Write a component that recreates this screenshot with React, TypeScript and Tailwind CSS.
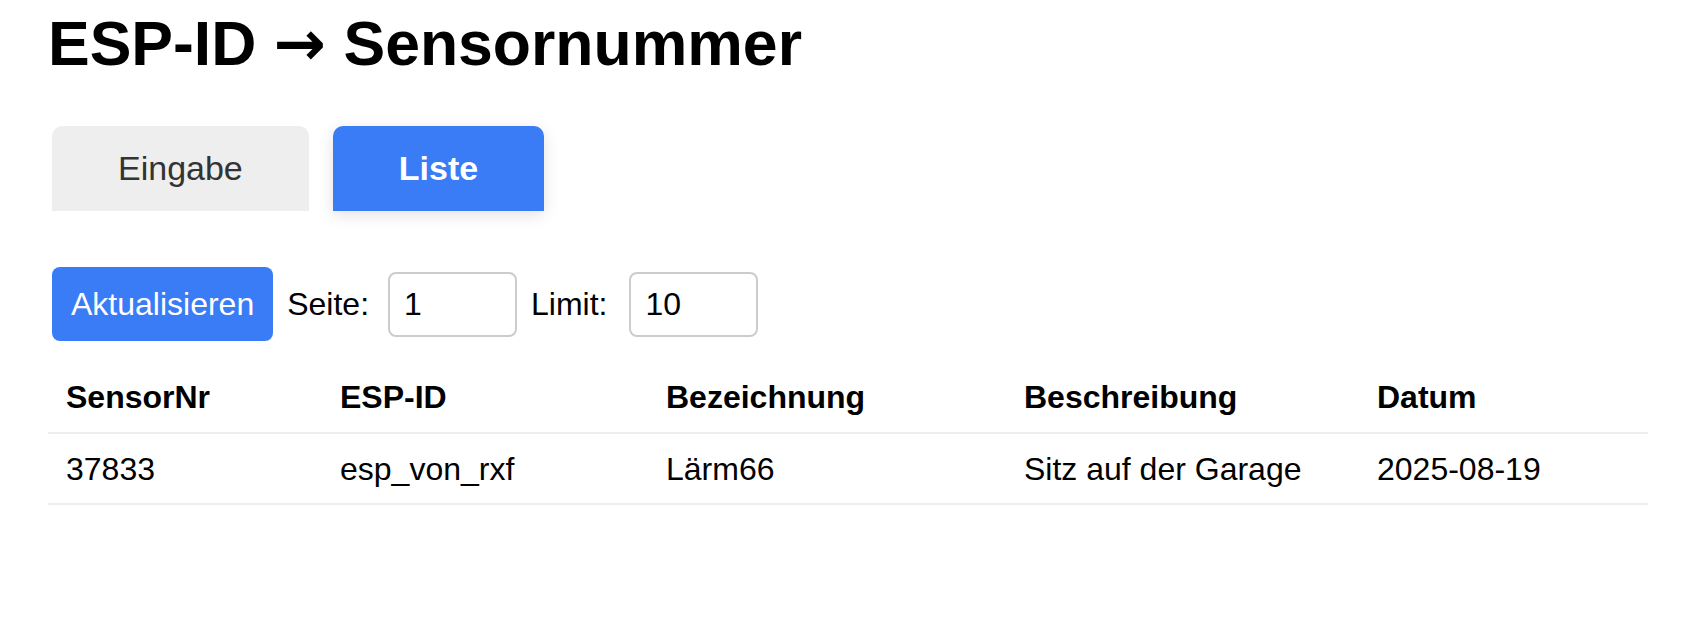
import React from 'react';

const rows = [
  {
    sensorNr: '37833',
    espId: 'esp_von_rxf',
    name: 'Lärm66',
    description: 'Sitz auf der Garage',
    date: '2025-08-19',
  },
];

function App() {
  const [tab, setTab] = React.useState<'eingabe' | 'liste'>('liste');
  const [page, setPage] = React.useState('1');
  const [limit, setLimit] = React.useState('10');

  return (
    <div className="min-h-screen bg-white px-[48px] pt-[6px] text-black font-['Liberation_Sans',Arial,sans-serif]">
      <h1 className="text-[62.5px] font-bold leading-[74px]">
        ESP-ID <span className="font-['DejaVu_Sans',sans-serif]">→</span> Sensornummer
      </h1>

      {/* Tabs */}
      <div className="mt-[45px] flex gap-[24px] pl-[4px]">
        <button
          onClick={() => setTab('eingabe')}
          className={`h-[85px] rounded-t-[10px] px-[66px] text-[34px] ${
            tab === 'eingabe'
              ? 'bg-[#3a7bf6] font-bold text-white shadow-[0_4px_16px_rgba(0,0,0,0.12)]'
              : 'bg-[#eeeeee] text-[#333333]'
          }`}
        >
          Eingabe
        </button>
        <button
          onClick={() => setTab('liste')}
          className={`h-[85px] rounded-t-[10px] px-[66px] text-[34px] ${
            tab === 'liste'
              ? 'bg-[#3a7bf6] font-bold text-white shadow-[0_4px_16px_rgba(0,0,0,0.12)]'
              : 'bg-[#eeeeee] text-[#333333]'
          }`}
        >
          Liste
        </button>
      </div>

      {/* Steuerung */}
      <div className="mt-[56px] flex items-center pl-[4px] text-[32px]">
        <button className="h-[74px] rounded-[8px] bg-[#3a7bf6] px-[19px] text-white">Aktualisieren</button>
        <label className="ml-[14px] flex items-center">
          Seite:
          <input
            value={page}
            onChange={(e) => setPage(e.target.value)}
            className="ml-[19px] h-[65px] w-[129px] rounded-[8px] border-2 border-[#cccccc] pl-[14px] outline-none"
          />
        </label>
        <label className="ml-[14px] flex items-center">
          Limit:
          <input
            value={limit}
            onChange={(e) => setLimit(e.target.value)}
            className="ml-[22px] h-[65px] w-[129px] rounded-[8px] border-2 border-[#cccccc] pl-[14px] outline-none"
          />
        </label>
      </div>

      {/* Tabelle */}
      <table className="mt-[22px] w-full table-fixed border-collapse text-left text-[32px] leading-[37px]">
        <colgroup>
          <col className="w-[274px]" />
          <col className="w-[326px]" />
          <col className="w-[358px]" />
          <col className="w-[353px]" />
          <col />
        </colgroup>
        <thead>
          <tr className="border-b-2 border-[#eeeeee]">
            <th className="px-[18px] py-[16px] font-bold">SensorNr</th>
            <th className="px-[18px] py-[16px] font-bold">ESP-ID</th>
            <th className="px-[18px] py-[16px] font-bold">Bezeichnung</th>
            <th className="px-[18px] py-[16px] font-bold">Beschreibung</th>
            <th className="px-[18px] py-[16px] font-bold">Datum</th>
          </tr>
        </thead>
        <tbody>
          {rows.map((r) => (
            <tr key={r.sensorNr} className="border-b-2 border-[#eeeeee]">
              <td className="px-[18px] pb-[15px] pt-[17px]">{r.sensorNr}</td>
              <td className="px-[18px] pb-[15px] pt-[17px]">{r.espId}</td>
              <td className="px-[18px] pb-[15px] pt-[17px]">{r.name}</td>
              <td className="px-[18px] pb-[15px] pt-[17px]">{r.description}</td>
              <td className="px-[18px] pb-[15px] pt-[17px]">{r.date}</td>
            </tr>
          ))}
        </tbody>
      </table>
    </div>
  );
}

export default App;
